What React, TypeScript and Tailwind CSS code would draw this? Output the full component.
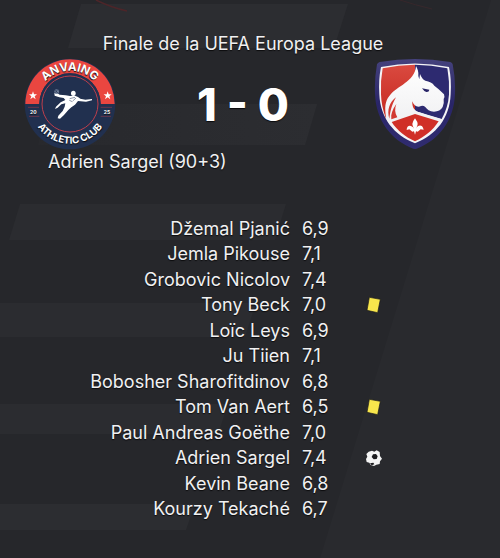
const players = [
  { name: "Džemal Pjanić", rating: "6,9" },
  { name: "Jemla Pikouse", rating: "7,1" },
  { name: "Grobovic Nicolov", rating: "7,4" },
  { name: "Tony Beck", rating: "7,0", event: "card" },
  { name: "Loïc Leys", rating: "6,9" },
  { name: "Ju Tiien", rating: "7,1" },
  { name: "Bobosher Sharofitdinov", rating: "6,8" },
  { name: "Tom Van Aert", rating: "6,5", event: "card" },
  { name: "Paul Andreas Goëthe", rating: "7,0" },
  { name: "Adrien Sargel", rating: "7,4", event: "goal" },
  { name: "Kevin Beane", rating: "6,8" },
  { name: "Kourzy Tekaché", rating: "6,7" },
];

function Backdrop() {
  return (
    <svg
      className="absolute inset-0 -z-10 h-full w-full"
      viewBox="0 0 500 558"
      preserveAspectRatio="xMidYMin slice"
      aria-hidden="true"
    >
      <defs>
        <linearGradient id="fade" x1="0" x2="1">
          <stop offset="0" stopColor="#2c2d31" stopOpacity="0.3" />
          <stop offset="1" stopColor="#2c2d31" />
        </linearGradient>
      </defs>
      <path d="M491 0H500V558H320Z" fill="#292a2e" />
      <path d="M81 4H348L334 48H68Z" fill="#2c2d31" />
      <path d="M50 104H317L305 145H38Z" fill="url(#fade)" />
      <path d="M20 204H286L275 240H9Z" fill="#2b2c30" />
      <path d="M0 303H256L245 337H0Z" fill="#2b2c30" />
      <path d="M0 404H228L218 434H0Z" fill="#2b2c30" />
      <path d="M0 504H195L186 530H0Z" fill="#2c2d31" />
      <path d="M96 0Q110 7 127 11" fill="none" stroke="#4d2529" strokeWidth="1.5" />
      <path d="M400 0Q415 5 432 9" fill="none" stroke="#37272b" strokeWidth="1" />
    </svg>
  );
}

function AnvaingCrest() {
  return (
    <svg className="size-[92px] shrink-0" viewBox="28 24 276 276" role="img" aria-label="Anvaing Athletic Club">
      <defs>
        <path id="arc-top" d="M66 162A100 100 0 0 1 266 162" />
        <path id="arc-bottom" d="M47 162A119 119 0 0 0 285 162" />
      </defs>
      <circle cx="166" cy="162" r="136" fill="#21304f" />
      <path d="M32 162A134 134 0 0 1 300 162H258A92 92 0 0 0 74 162Z" fill="#ea4640" />
      <circle cx="166" cy="162" r="92" fill="#21304f" />
      <circle cx="166" cy="162" r="84" fill="none" stroke="#bd3e4b" strokeWidth="3" />
      <g fill="#fff" fontFamily="Inter, sans-serif" fontWeight="700" textAnchor="middle">
        <text fontSize="35">
          <textPath href="#arc-top" startOffset="50%">ANVAING</textPath>
        </text>
        <text fontSize="29">
          <textPath href="#arc-bottom" startOffset="50%">ATHLETIC CLUB</textPath>
        </text>
        <text x="56" y="191" fontSize="15">20</text>
        <text x="277" y="191" fontSize="15">25</text>
      </g>
      <path d="M40 172H73M43 199H74M258 172H292M258 199H289" stroke="#8f3a4c" strokeWidth="2" />
      <path id="star" d="M55 124L58 133H67L60 139L63 148L55 142L47 148L50 139L43 133H52Z" fill="#fff" />
      <use href="#star" x="224" />
      {/* player striking the ball */}
      <g fill="#fff">
        <ellipse cx="176" cy="130" rx="7" ry="8" />
        <path d="M166 138L181 137Q191 140 197 146L212 149L232 147L232 151L214 155L190 153L181 164L170 172L161 180L148 195L136 206L129 205L131 197L144 183L150 170L152 160L140 163L129 173L121 177L124 170L138 157L152 150L147 144L134 142L120 137L119 130L124 127L135 134L153 136Z" />
      </g>
      <path d="M165 146L181 142M174 153L184 144M164 151L173 155" stroke="#53617c" strokeWidth="2" />
      <circle cx="126" cy="125" r="7" fill="#71809c" />
      <path d="M121 121L130 129M128 119L122 130" stroke="#21304f" strokeWidth="2" />
    </svg>
  );
}

function HoundCrest() {
  return (
    <svg className="size-[92px] shrink-0" viewBox="15 24 276 276" role="img" aria-label="Blason du club adverse">
      <defs>
        <linearGradient id="crest-red" x1="0" x2="0" y1="0" y2="1">
          <stop offset="0" stopColor="#da4a40" />
          <stop offset="1" stopColor="#c5281f" />
        </linearGradient>
        <linearGradient id="rim" x1="0" x2="0" y1="0" y2="1">
          <stop offset="0" stopColor="#45427d" />
          <stop offset="0.5" stopColor="#292568" />
          <stop offset="1" stopColor="#302c70" />
        </linearGradient>
        <linearGradient id="fur" x1="0" x2="0" y1="0" y2="1">
          <stop offset="0" stopColor="#fff" />
          <stop offset="1" stopColor="#f0f0f2" />
        </linearGradient>
      </defs>
      <path
        d="M36 43Q38 38 44 36Q150 18 256 36Q262 38 263 43Q272 88 270 130C268 212 220 272 155 296Q150 298 145 296C80 272 32 212 30 130Q28 88 36 43Z"
        fill="url(#rim)"
      />
      <path
        d="M48 51Q150 30 252 51Q260 90 257 133C254 205 213 255 150 280C87 255 46 205 43 133Q40 90 48 51Z"
        fill="#f4f4f6"
      />
      <path d="M53 55Q101 45 150 44V180L62 203Q49 169 48 133Q46 92 53 55Z" fill="url(#crest-red)" />
      <path d="M150 44Q199 45 247 55Q254 93 252 133Q250 171 230 207L150 183Z" fill="#2d2a70" />
      <path
        d="M153 48C158 57 161 65 160 78L163 88L165 72C169 82 174 89 181 92C193 94 203 98 208 107L221 118L237 133Q240 140 236 147Q238 160 233 171C228 180 219 185 207 185C194 184 186 178 180 170Q174 165 168 168C158 173 146 168 142 154C141 171 147 180 158 185C175 191 200 199 228 207L225 213L150 191L78 216L64 207C58 175 60 153 73 138C87 119 105 112 119 100C136 88 151 73 153 48Z"
        fill="url(#fur)"
      />
      <path d="M171 115L193 119Q192 127 184 126Q176 123 171 115Z" fill="#292568" />
      <path d="M93 142C73 157 65 181 73 206C76 184 79 167 93 142Z" fill="#d23931" />
      <path d="M94 162C82 179 77 193 79 208L97 202C89 189 89 175 94 162Z" fill="#d23931" />
      <path d="M80 216L150 192L221 214C203 242 179 260 150 274C121 261 97 242 80 216Z" fill="#d02f27" />
      {/* fleur-de-lis */}
      <path
        d="M150 205Q158 216 158 222Q157 230 153 236C158 225 170 223 174 233L176 239L167 238L158 245L153 244L150 254L147 244L142 245L133 238L125 240C125 225 139 223 147 236Q143 230 142 222Q143 214 150 205Z"
        fill="#fff"
      />
    </svg>
  );
}

function YellowCard() {
  return (
    <svg className="h-[18px] w-4" viewBox="0 0 48 54" role="img" aria-label="Carton jaune">
      <path d="M10 4L43 10L35 50L3 43Z" fill="#f8e64c" stroke="#17171a" strokeWidth="2" strokeLinejoin="round" />
    </svg>
  );
}

function Ball() {
  return (
    <svg className="size-4" viewBox="0 0 48 48" role="img" aria-label="But">
      <path
        d="M18 2L25 5L32 1L41 6L42 18L48 26L42 34L41 42L31 44L24 48L14 45L10 38L2 36L0 27L4 20L1 12L8 5Z"
        fill="#f4f4f4"
      />
      <path d="M21 13L30 12L35 19L32 27L23 28L17 21Z" fill="#1b1b1e" />
      <path d="M12 40L22 38L25 43L17 46Z" fill="#1b1b1e" />
    </svg>
  );
}

export default function App() {
  return (
    <main className="relative isolate min-h-screen overflow-hidden bg-[#26272b] pt-8 pb-9 font-['Inter',sans-serif] text-lg text-[#f1f1f2] [text-shadow:0_1px_1px_#0b0b0d]">
      <Backdrop />

      <header className="pr-[38px] pl-6">
        <h1 className="text-center leading-6">Finale de la UEFA Europa League</h1>
        <div className="mt-0.5 flex items-center justify-between">
          <AnvaingCrest />
          <p className="text-[45px] leading-none font-extrabold text-white">1 - 0</p>
          <HoundCrest />
        </div>
        <p className="pl-6 leading-6">Adrien Sargel (90+3)</p>
      </header>

      <table className="mt-[42px] h-[306px] w-full table-fixed">
        <tbody>
          {players.map((p) => (
            <tr key={p.name} className="leading-6">
              <th scope="row" className="w-[58%] p-0 text-right font-normal">{p.name}</th>
              <td className="w-[12%] p-0 pl-3">{p.rating}</td>
              <td className="p-0 pl-4">
                {p.event === "card" && <YellowCard />}
                {p.event === "goal" && <Ball />}
              </td>
            </tr>
          ))}
        </tbody>
      </table>
    </main>
  );
}
